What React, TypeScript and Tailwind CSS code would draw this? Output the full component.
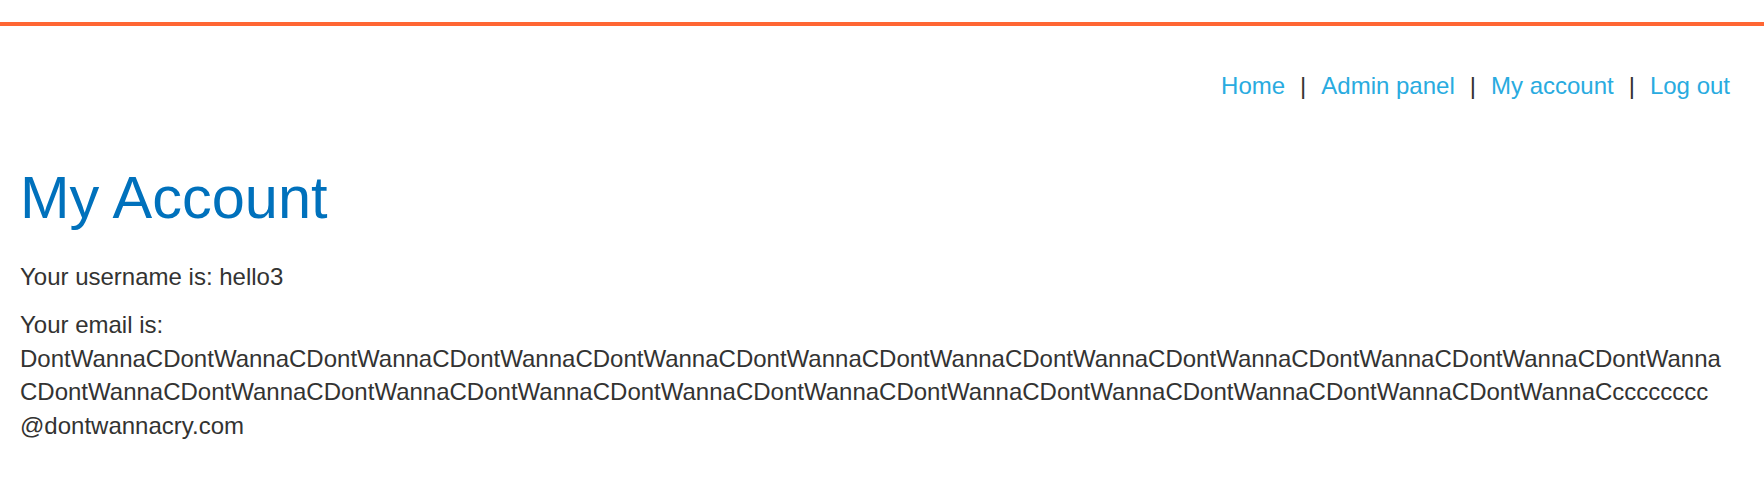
import React from "react";

const links = ["Home", "Admin panel", "My account", "Log out"];

const emailLines = [
  "DontWannaC".repeat(11) + "DontWanna",
  "CDontWanna".repeat(11) + "Ccccccccc",
  "@dontwannacry.com",
];

const App: React.FC = () => {
  return (
    <div className="min-h-[496px] w-full bg-white font-['Liberation_Sans',Arial,sans-serif] text-[24px] leading-[33.5px] text-[#333332]">
      {/* Top accent bar */}
      <div className="pt-[22px]">
        <div className="h-[4px] bg-[#ff6633]" />
      </div>

      {/* Navigation */}
      <nav className="mt-[43px] flex justify-end pr-[34px]">
        {links.map((label, i) => (
          <React.Fragment key={label}>
            {i > 0 && <span className="mx-[15px] text-[#333332]">|</span>}
            <a href="#" className="text-[#29abe0]">
              {label}
            </a>
          </React.Fragment>
        ))}
      </nav>

      {/* Content */}
      <main className="pl-[20px] pr-[33px]">
        <h1 className="mt-[59px] text-[59.5px] leading-[72px] text-[#0071bc]">My Account</h1>
        <p className="mt-[26px]">Your username is: hello3</p>
        <p className="mt-[15px]">
          Your email is:
          {emailLines.map((line) => (
            <React.Fragment key={line}>
              <br />
              {line}
            </React.Fragment>
          ))}
        </p>
      </main>
    </div>
  );
};

export default App;
